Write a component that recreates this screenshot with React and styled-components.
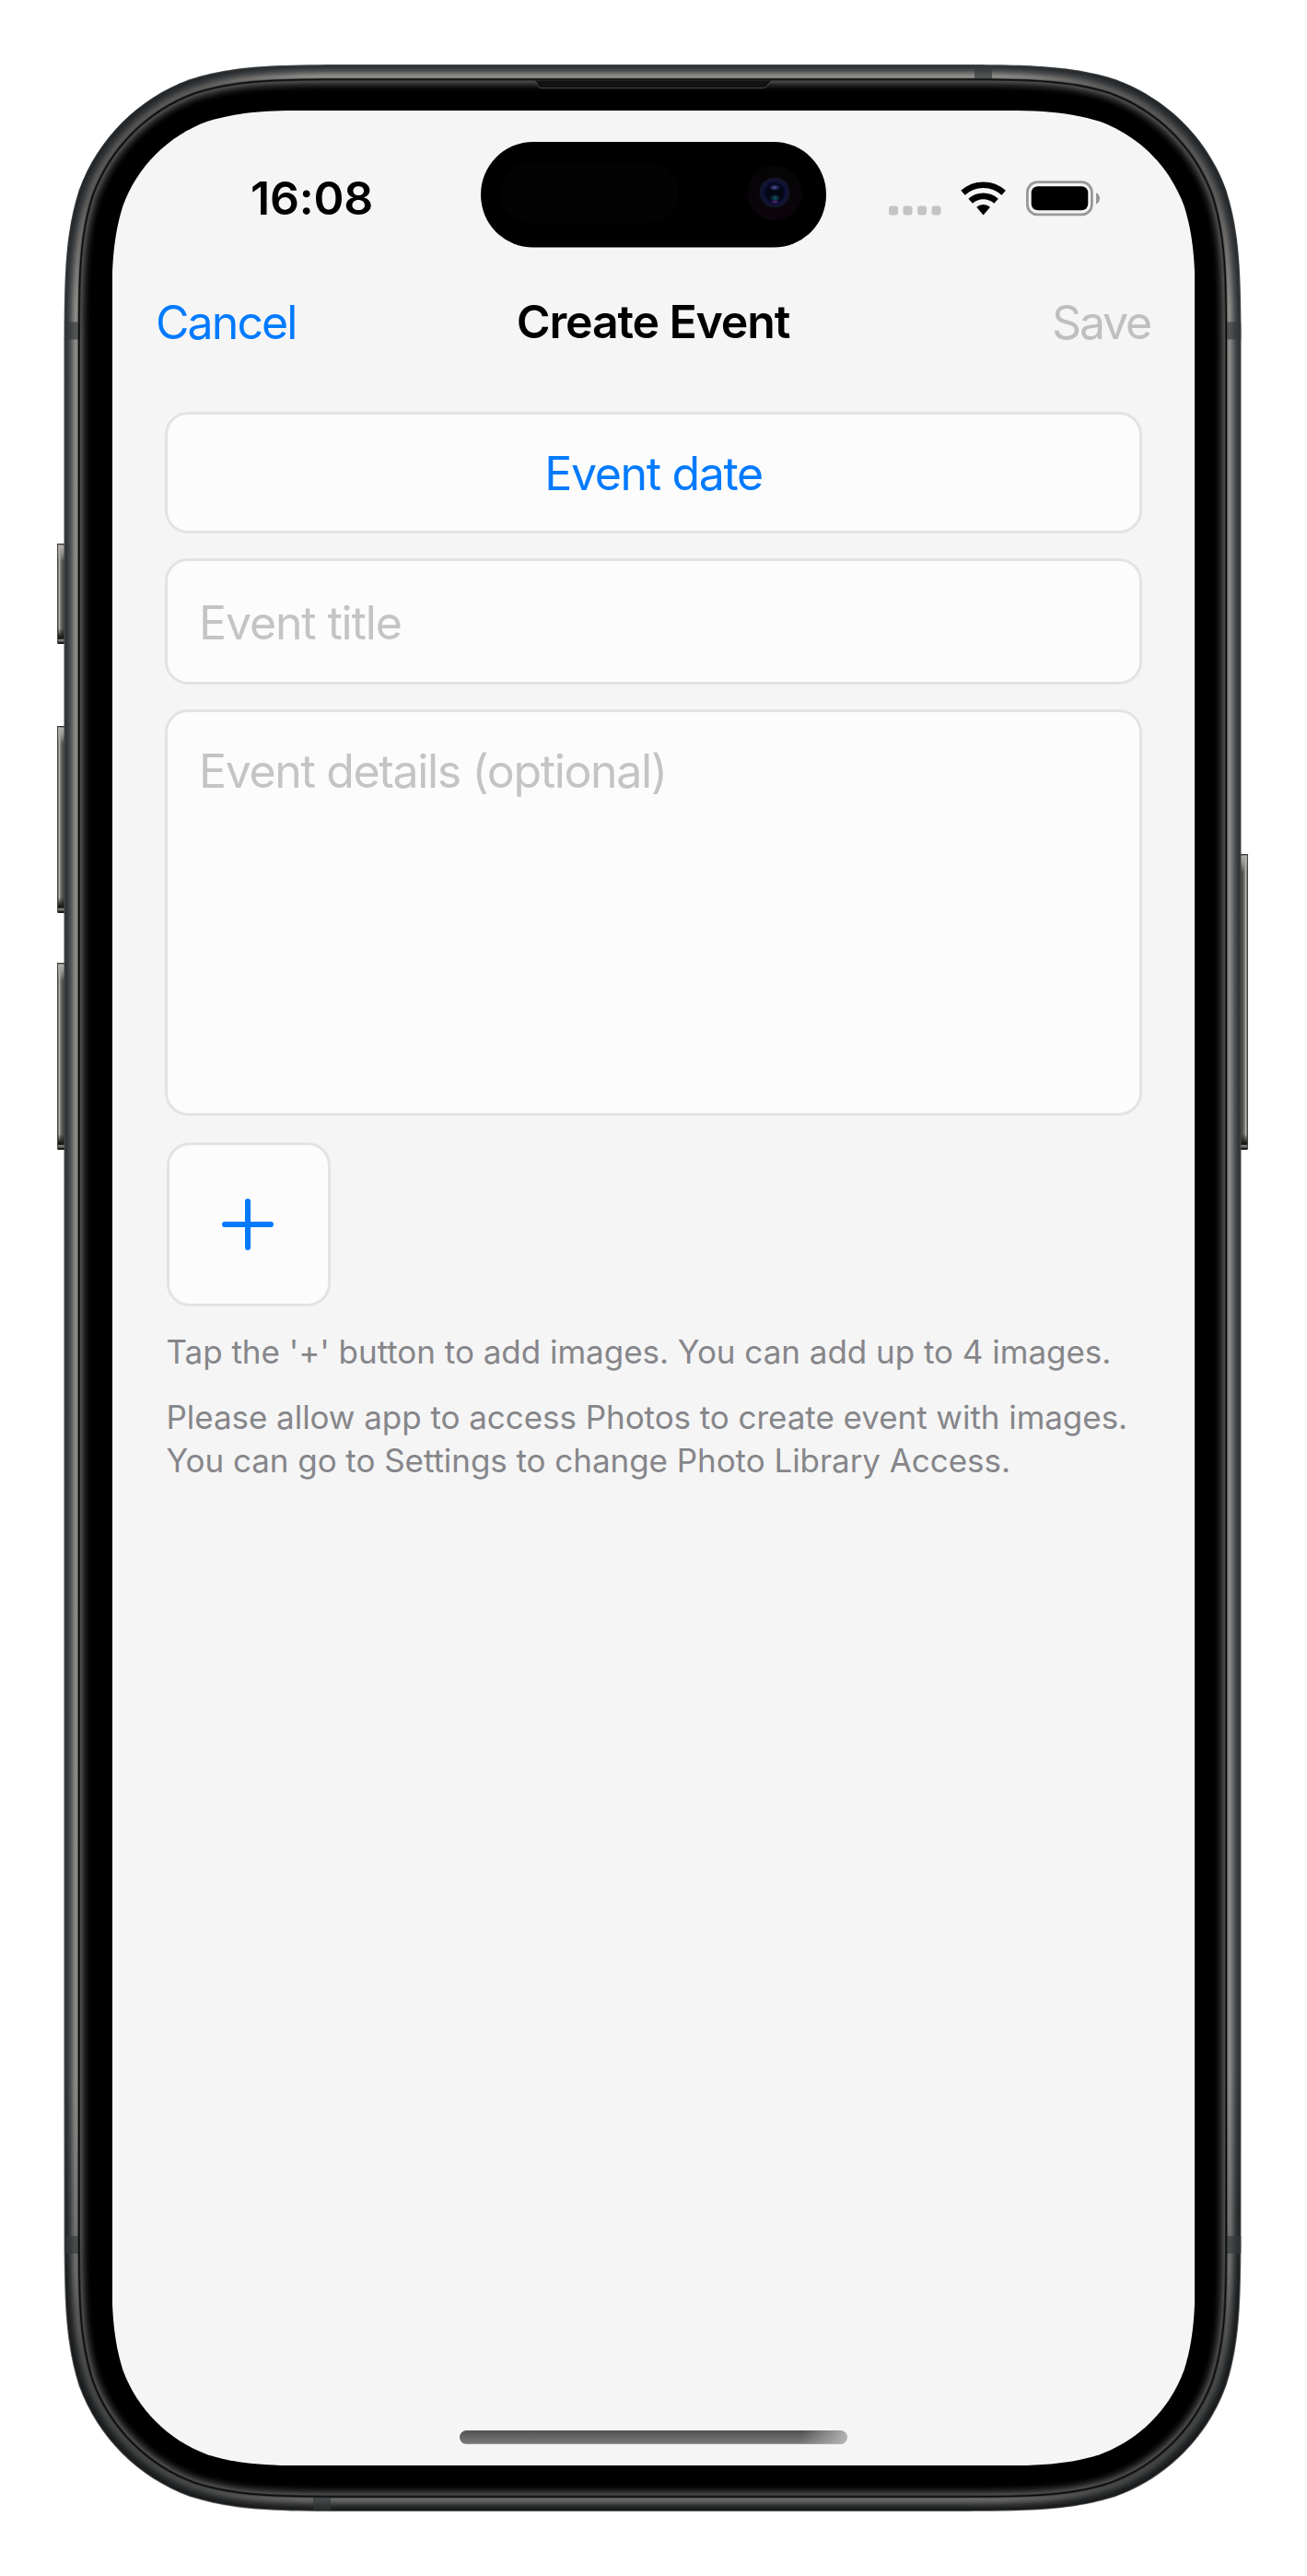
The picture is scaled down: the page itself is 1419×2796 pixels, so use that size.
import React from "react";
import styled, { createGlobalStyle } from "styled-components";

const GlobalStyle = createGlobalStyle`
  * { box-sizing: border-box; }
  body { margin: 0; background: #fff; }
  button { appearance: none; border: 0; background: none; padding: 0; margin: 0; }
`;

const FONT = '"Inter", "Liberation Sans", sans-serif';
const BLUE = "#007aff";

/* Continuous-curvature rounded rectangle, as used for device outlines. */
function smoothRect(x, y, w, h, r) {
  const X = x + w;
  const Y = y + h;
  const k = [1.52866483, 1.08849323, 0.86840689, 0.63149399, 0.37282392, 0.16906013, 0.07491176].map(
    (v) => v * r
  );
  const [a, b, c, d, e, f, g] = k;
  return [
    `M${x + a},${y} L${X - a},${y}`,
    `C${X - b},${y} ${X - c},${y} ${X - d},${y + g}`,
    `C${X - e},${y + f} ${X - f},${y + e} ${X - g},${y + d}`,
    `C${X},${y + c} ${X},${y + b} ${X},${y + a}`,
    `L${X},${Y - a}`,
    `C${X},${Y - b} ${X},${Y - c} ${X - g},${Y - d}`,
    `C${X - f},${Y - e} ${X - e},${Y - f} ${X - d},${Y - g}`,
    `C${X - c},${Y} ${X - b},${Y} ${X - a},${Y}`,
    `L${x + a},${Y}`,
    `C${x + b},${Y} ${x + c},${Y} ${x + d},${Y - g}`,
    `C${x + e},${Y - f} ${x + f},${Y - e} ${x + g},${Y - d}`,
    `C${x},${Y - c} ${x},${Y - b} ${x},${Y - a}`,
    `L${x},${y + a}`,
    `C${x},${y + b} ${x},${y + c} ${x + g},${y + d}`,
    `C${x + f},${y + e} ${x + e},${y + f} ${x + d},${y + g}`,
    `C${x + c},${y} ${x + b},${y} ${x + a},${y} Z`,
  ].join(" ");
}

const SCREEN_CLIP = smoothRect(-1, -0.5, 1177, 2557, 165);

const Stage = styled.main`
  position: relative;
  width: 1419px;
  height: 2796px;
  padding: 120px 122px;
  background: #fff;
  overflow: hidden;
  font-family: ${FONT};
`;

const Chassis = styled.svg`
  position: absolute;
  inset: 0;
  display: block;
`;

const Screen = styled.section`
  position: relative;
  width: 1175px;
  height: 2556px;
  display: flex;
  flex-direction: column;
  background: #f5f5f5;
  clip-path: path("${SCREEN_CLIP}");
`;

const StatusBar = styled.header`
  display: grid;
  grid-template-columns: 400px 375px 400px;
  height: 189px;
  align-items: center;
`;

const Clock = styled.div`
  padding: 1px 0 0 33px;
  text-align: center;
  font-size: 50px;
  line-height: 60px;
  font-weight: 600;
  letter-spacing: -0.2px;
  color: #000;
`;

const Island = styled.div`
  align-self: start;
  margin-top: 34px;
  height: 114px;
  svg { display: block; }
`;

const StatusIcons = styled.div`
  display: flex;
  align-items: center;
  padding-left: 68px;
  height: 60px;
`;

const NavBar = styled.nav`
  display: grid;
  grid-template-columns: 1fr auto 1fr;
  align-items: center;
  height: 79px;
  padding: 1px 48px 0 47px;
`;

const NavButton = styled.button`
  justify-self: ${(p) => p.$side};
  padding-top: 2px;
  font-family: inherit;
  font-size: 50px;
  line-height: 60px;
  letter-spacing: ${(p) => p.$track}px;
  color: ${(p) => p.$color};
`;

const NavTitle = styled.h1`
  margin: 0;
  font-size: 50px;
  line-height: 60px;
  font-weight: 600;
  letter-spacing: -1.15px;
  color: #000;
`;

const Form = styled.div`
  display: flex;
  flex-direction: column;
  padding: 59px 57px 0;
`;

const Field = styled.div`
  display: flex;
  align-items: ${(p) => (p.$multiline ? "flex-start" : "center")};
  justify-content: ${(p) => (p.$centered ? "center" : "flex-start")};
  height: ${(p) => p.$height}px;
  margin-bottom: ${(p) => p.$gap}px;
  padding: ${(p) => (p.$multiline ? "34px 34px 0" : "2px 34px 0")};
  border: 3px solid #e3e3e3;
  border-radius: 25px;
  background: #fcfcfc;
`;

const FieldText = styled.span`
  font-size: 50px;
  line-height: 60px;
  letter-spacing: ${(p) => p.$track}px;
  color: ${(p) => (p.$action ? BLUE : "#c4c4c6")};
`;

const AddTile = styled.button`
  display: flex;
  align-items: center;
  justify-content: center;
  width: 178px;
  height: 178px;
  margin-left: 2px;
  padding-right: 2px;
  border: 3px solid #e3e3e3;
  border-radius: 25px;
  background: #fcfcfc;
`;

const Notes = styled.div`
  display: flex;
  flex-direction: column;
  gap: 24px;
  margin-top: 26px;
  padding-left: 1.5px;
`;

const Note = styled.p`
  margin: 0;
  font-size: 35px;
  line-height: 47px;
  color: #86868a;
  white-space: nowrap;
`;

const NoteLine = styled.span`
  display: block;
  letter-spacing: ${(p) => p.$track}px;
`;

const HomeIndicator = styled.div`
  width: 421px;
  height: 15px;
  margin: auto auto 23px;
  border-radius: 8px;
  background: linear-gradient(100deg, transparent 88%, rgba(190, 190, 190, 0.9) 100%),
    linear-gradient(#505151, #777 90%, #a5a5a5);
`;

/* Rim colours from the outer edge inwards, one per pixel. */
const RIM_LIGHT = [
  "#484b4c", "#303436", "#2f3336", "#343739", "#3b3f42", "#434648", "#4a4c4f", "#545657",
  "#626262", "#6f6e6d", "#7a7876", "#858380", "#8e8b87", "#908d89", "#797775", "#3c3e40",
];
const RIM_DARK = [
  "#6a6b6c", "#1b1d1e", "#1a1c1d", "#1f2122", "#242627", "#2a2c2d", "#313334", "#3a3c3d",
  "#444647", "#4e4f4f", "#575857", "#5f605e", "#636562", "#646663", "#545654", "#2e2f30",
];
const BEZEL = [
  "#08090a", "#202020", "#4a4a4a", "#434343", "#393939", "#2f2f2f", "#262626", "#1e1e1e",
  "#171717", "#111", "#0b0b0b", "#070707", "#040404", "#020202", "#000",
];

function ringPath(i) {
  return smoothRect(69.5 + i, 70 + i, 1278 - 2 * i, 2656 - 2 * i, 216 - i);
}

function SideButton({ x, y, height, flip }) {
  return (
    <g transform={flip ? `translate(${x + 9} ${y}) scale(-1 1)` : `translate(${x} ${y})`}>
      <rect width="9" height={height} rx="1.5" fill="url(#btn)" />
      <rect width="9" height="1.4" fill="#3a3835" />
      <rect x="1" y="1.5" width="7" height="18" fill="url(#btnTop)" />
      <rect x="1" y={height - 17} width="8" height="17" fill="url(#btnEnd)" />
    </g>
  );
}

function DeviceArt() {
  const corners = [
    [160, 160, 0.5],
    [1257, 160, 0.5],
    [160, 2636, 0.45],
    [1257, 2636, 0.45],
  ];
  return (
    <Chassis width="1419" height="2796" viewBox="0 0 1419 2796" aria-hidden="true">
      <defs>
        {RIM_LIGHT.map((c, i) => (
          <linearGradient key={i} id={`rim${i}`} gradientUnits="userSpaceOnUse" x1="0" y1="70" x2="0" y2="2726">
            <stop offset="0" stopColor={c} />
            <stop offset="0.82" stopColor={c} />
            <stop offset="0.92" stopColor={RIM_DARK[i]} />
            <stop offset="1" stopColor={RIM_DARK[i]} />
          </linearGradient>
        ))}
        <radialGradient id="shade">
          <stop offset="0" stopColor="#16181a" stopOpacity="1" />
          <stop offset="0.45" stopColor="#16181a" stopOpacity="0.85" />
          <stop offset="1" stopColor="#16181a" stopOpacity="0" />
        </radialGradient>
        <clipPath id="body">
          <path d={ringPath(0)} />
        </clipPath>
        <linearGradient id="btn">
          <stop offset="0" stopColor="#3b3936" />
          <stop offset="0.12" stopColor="#55534f" />
          <stop offset="0.25" stopColor="#c4c2bd" />
          <stop offset="0.42" stopColor="#74726d" />
          <stop offset="0.75" stopColor="#4b4a46" />
          <stop offset="1" stopColor="#252522" />
        </linearGradient>
        <linearGradient id="btnTop" x1="0" y1="0" x2="0" y2="1">
          <stop offset="0" stopColor="#b3b1ac" />
          <stop offset="0.4" stopColor="#aaa8a3" stopOpacity="0.8" />
          <stop offset="1" stopColor="#aaa" stopOpacity="0" />
        </linearGradient>
        <linearGradient id="btnEnd" x1="0" y1="0" x2="0" y2="1">
          <stop offset="0" stopColor="#1b1a19" stopOpacity="0" />
          <stop offset="0.55" stopColor="#1b1a19" />
          <stop offset="0.66" stopColor="#1b1a19" />
          <stop offset="0.74" stopColor="#8a8884" />
          <stop offset="0.84" stopColor="#605e5a" />
          <stop offset="0.9" stopColor="#1b1a19" />
          <stop offset="1" stopColor="#1b1a19" />
        </linearGradient>
      </defs>

      <SideButton x={62} y={590} height={109} />
      <SideButton x={62} y={788} height={203} />
      <SideButton x={62} y={1045} height={203} />
      <SideButton x={1346} y={927} height={321} flip />

      {RIM_LIGHT.map((c, i) => (
        <path key={i} d={ringPath(i)} fill={`url(#rim${i})`} />
      ))}
      <g clipPath="url(#body)">
        {corners.map(([cx, cy, o]) => (
          <circle key={`${cx}-${cy}`} cx={cx} cy={cy} r="190" fill="url(#shade)" opacity={o} />
        ))}
        <g fill="#34383a" opacity="0.66">
          <rect x="70" y="349.5" width="17" height="19" />
          <rect x="1331" y="349.5" width="17" height="19" />
          <rect x="70" y="2427" width="17" height="19" />
          <rect x="1331" y="2427" width="17" height="19" />
          <rect x="1058" y="71" width="19" height="16" />
          <rect x="340" y="2709" width="19" height="16" />
        </g>
      </g>
      {BEZEL.map((c, i) => (
        <path key={c + i} d={ringPath(i + 15.5)} fill={c} />
      ))}
      <path d="M579,87.5 C585,88 582,95.6 588,95.6 L828,95.6 C835,95.6 833,88 839,87.5 Z" fill="#121212" />
      <path
        d="M579,88.2 C585,88.2 582,95.6 588,95.6 L828,95.6 C835,95.6 833,88.2 839,88.2"
        fill="none"
        stroke="#4a4a4a"
        strokeWidth="1"
      />
    </Chassis>
  );
}

function IslandArt() {
  return (
    <svg width="375" height="115" viewBox="0 0 375 115" aria-hidden="true">
      <defs>
        <linearGradient id="lensRing" x1="0" y1="0" x2="0" y2="1">
          <stop offset="0" stopColor="#040405" />
          <stop offset="1" stopColor="#0c040c" />
        </linearGradient>
        <radialGradient id="lens">
          <stop offset="0" stopColor="#04040c" />
          <stop offset="0.6" stopColor="#060719" />
          <stop offset="0.72" stopColor="#0d0f40" />
          <stop offset="0.82" stopColor="#11142e" />
          <stop offset="1" stopColor="#131424" />
        </radialGradient>
        <radialGradient id="glintTop">
          <stop offset="0" stopColor="#5a5fae" />
          <stop offset="1" stopColor="#20246a" stopOpacity="0" />
        </radialGradient>
        <radialGradient id="glintTeal">
          <stop offset="0" stopColor="#14626a" />
          <stop offset="1" stopColor="#0a3a50" stopOpacity="0" />
        </radialGradient>
        <radialGradient id="glintPink">
          <stop offset="0" stopColor="#7a248c" />
          <stop offset="1" stopColor="#3a1060" stopOpacity="0" />
        </radialGradient>
      </defs>
      <rect width="375" height="114.6" rx="57" fill="#000" />
      <rect x="21" y="22" width="194" height="66" rx="33" fill="#030303" />
      <circle cx="319" cy="55" r="30" fill="url(#lensRing)" />
      <circle cx="319" cy="55" r="16.5" fill="url(#lens)" />
      <ellipse cx="319" cy="49.5" rx="7" ry="4" fill="url(#glintTop)" />
      <ellipse cx="319.5" cy="61" rx="6" ry="5" fill="url(#glintTeal)" />
      <ellipse cx="319.5" cy="65" rx="5" ry="2.4" fill="url(#glintPink)" />
    </svg>
  );
}

function SignalDots() {
  return (
    <svg width="57" height="40" viewBox="0 0 57 40" aria-label="No signal">
      {[0, 15.5, 31, 46.5].map((x) => (
        <rect key={x} x={x} y="28.6" width="10" height="10" rx="3" fill="#c4c4c4" />
      ))}
    </svg>
  );
}

const WifiSvg = styled.svg`
  margin-left: 21px;
`;

function Wifi() {
  const arc = (r, t) => {
    const dx = r * Math.sin(t);
    const dy = r * Math.cos(t);
    return `M${24.6 - dx},${38.5 - dy} A${r},${r} 0 0 1 ${24.6 + dx},${38.5 - dy}`;
  };
  return (
    <WifiSvg width="50" height="40" viewBox="0 0 50 40" aria-label="Wi-Fi">
      <path d={arc(32.8, 0.74)} fill="none" stroke="#000" strokeWidth="6.6" />
      <path d={arc(20.7, 0.74)} fill="none" stroke="#000" strokeWidth="6.8" />
      <path d={`${arc(11.4, 0.71)} L24.6,38.5 Z`} fill="#000" />
    </WifiSvg>
  );
}

const BatterySvg = styled.svg`
  margin-left: 21px;
`;

function Battery() {
  return (
    <BatterySvg width="81" height="40" viewBox="0 0 81 40" aria-label="Battery full">
      <rect x="1.4" y="2.7" width="70" height="35.2" rx="11" fill="none" stroke="#989898" strokeWidth="2.8" />
      <rect x="5.7" y="7.3" width="61.6" height="26" rx="7" fill="#000" />
      <path d="M76,14.3 C81.4,16.7 81.4,24.3 76,26.5 Z" fill="#989898" />
    </BatterySvg>
  );
}

function PlusIcon() {
  return (
    <svg width="58" height="58" viewBox="0 0 58 58" aria-label="Add">
      <path d="M29,4 V54 M4,29 H54" stroke={BLUE} strokeWidth="6" strokeLinecap="round" />
    </svg>
  );
}

export default function App() {
  return (
    <>
      <GlobalStyle />
      <Stage>
        <DeviceArt />
        <Screen>
          <StatusBar>
            <Clock>16:08</Clock>
            <Island>
              <IslandArt />
            </Island>
            <StatusIcons>
              <SignalDots />
              <Wifi />
              <Battery />
            </StatusIcons>
          </StatusBar>

          <NavBar>
            <NavButton $side="start" $color={BLUE} $track={-1.9}>Cancel</NavButton>
            <NavTitle>Create Event</NavTitle>
            <NavButton $side="end" $color="#bfbfc0" $track={-2.2}>Save</NavButton>
          </NavBar>

          <Form>
            <Field $height={132} $gap={27} $centered>
              <FieldText $action $track={-1.35}>Event date</FieldText>
            </Field>
            <Field $height={137} $gap={27}>
              <FieldText $track={-1.15}>Event title</FieldText>
            </Field>
            <Field $height={441} $gap={29} $multiline>
              <FieldText $track={-1.35}>Event details (optional)</FieldText>
            </Field>
            <AddTile>
              <PlusIcon />
            </AddTile>
            <Notes>
              <Note>
                <NoteLine $track={-0.02}>Tap the '+' button to add images. You can add up to 4 images.</NoteLine>
              </Note>
              <Note>
                <NoteLine $track={-0.05}>Please allow app to access Photos to create event with images.</NoteLine>
                <NoteLine $track={-0.05}>You can go to Settings to change Photo Library Access.</NoteLine>
              </Note>
            </Notes>
          </Form>

          <HomeIndicator />
        </Screen>
      </Stage>
    </>
  );
}
